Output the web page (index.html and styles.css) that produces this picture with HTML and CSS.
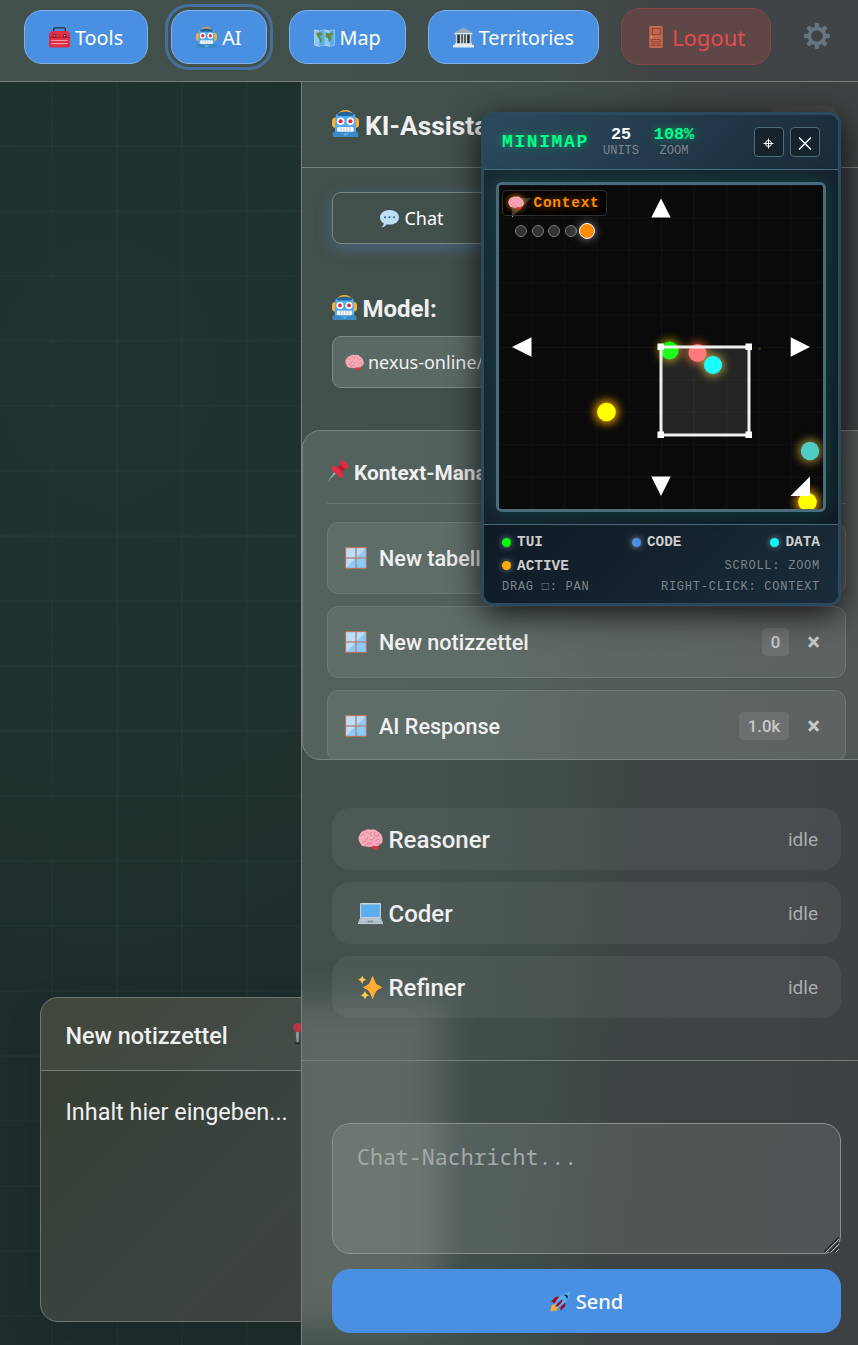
FILE: index.html
```html
<!DOCTYPE html>
<html lang="de">
<head>
<meta charset="utf-8">
<title>Workspace</title>
<link rel="stylesheet" href="styles.css">
</head>
<body>
<svg class="sprite" aria-hidden="true">
  <symbol id="robot" viewBox="0 0 36 36">
    <rect x="0" y="10" width="36" height="14" rx="5" fill="#ffac33"/><path d="M8 6Q10 0 18 0T28 6Z" fill="#ffac33"/>
    <path d="M5 7Q5 5 8 5H28Q31 5 31 7L32 24V31H4V24Z" fill="#55acee"/><path d="M7 5Q18-1 29 5L28 8H8Z" fill="#226699"/>
    <path d="M1 31Q1 29 4 29H32Q35 29 35 31V36H1Z" fill="#3b88c3"/><path d="M13 31H23L18 35Z" fill="#55acee"/>
    <circle cx="11.500" cy="15" r="5" fill="#fff"/><circle cx="24.500" cy="15" r="5" fill="#fff"/><circle cx="11.500" cy="15" r="2.800" fill="#dd2e44"/><circle cx="24.500" cy="15" r="2.800" fill="#dd2e44"/>
    <rect x="7" y="22.500" width="22" height="6.500" rx="2" fill="#f5f8fa"/><path d="M12 22.500V29M16 22.500V29M20 22.500V29M24 22.500V29" stroke="#aab8c2"/>
  </symbol>
  <symbol id="toolbox" viewBox="0 0 36 36">
    <path d="M8 8V3Q8 1.500 10 1.500H26Q28 1.500 28 3V8" fill="none" stroke="#292f33" stroke-width="2.500"/>
    <path d="M4 7H32Q36 10 36 14V17H0V14Q0 10 4 7Z" fill="#dd2e44"/><path d="M0 16H36V32Q36 35 33 35H3Q0 35 0 32Z" fill="#dd2e44"/>
    <path d="M0 18H36" stroke="#be1931" stroke-width="1.500"/><circle cx="9" cy="15" r="2.800" fill="#50272f"/><circle cx="27" cy="15" r="2.800" fill="#50272f"/><circle cx="9" cy="15" r="1.200" fill="#ccd6dd"/><circle cx="27" cy="15" r="1.200" fill="#ccd6dd"/>
    <path d="M4 23H32M4 28.500H32" stroke="#f4bfc5" stroke-width="1.500"/>
  </symbol>
  <symbol id="map" viewBox="0 0 36 36">
    <path d="M1 5L9 7L18 5L27 7L35 5V31L27 33L18 31L9 33L1 31Z" fill="#88c9f9" stroke="#ccd6dd" stroke-width="1.500"/>
    <path d="M9 7L18 5V31L9 33ZM27 7L35 5V31L27 33Z" fill="#5dadec"/>
    <path d="M4 10L12 9 15 12 12 15 10 17 14 21 13 26 11 28 10 22 7 18 5 14ZM20 9L25 11 31 9 33 13 29 15 30 20 27 26 25 24 24 19 19 17 20 13Z" fill="#5c913b"/>
  </symbol>
  <symbol id="temple" viewBox="0 0 36 36">
    <path d="M2 10L18 1L34 10Z" fill="#99aab5"/><rect x="3" y="10" width="30" height="3" fill="#e1e8ed"/><rect x="5" y="13" width="26" height="16" fill="#292f33"/>
    <path d="M6 13V29M13 13V29M18 13V29M23 13V29M30 13V29" stroke="#ccd6dd" stroke-width="2.600"/><path d="M3 28H33V31H36V35H0V31H3Z" fill="#e1e8ed"/>
  </symbol>
  <symbol id="door" viewBox="0 0 22 36">
    <rect width="22" height="36" rx="2" fill="#bf6952"/><rect x="5" y="4" width="13" height="10" fill="none" stroke="#8f3f2c" stroke-width="1.500"/><path d="M4 22H18V26H4ZM4 29H18V32H4Z" fill="#bf6952" stroke="#8f3f2c" stroke-width="1.300"/><circle cx="3.500" cy="18" r="1.700" fill="#ffac33"/>
  </symbol>
  <symbol id="gear" viewBox="0 0 36 36">
    <g fill="#66757f"><g id="teeth"><rect x="15" y="0" width="6" height="7" rx="2"/><rect x="15" y="29" width="6" height="7" rx="2"/></g><use href="#teeth" transform="rotate(45 18 18)"/><use href="#teeth" transform="rotate(90 18 18)"/><use href="#teeth" transform="rotate(135 18 18)"/></g>
    <circle cx="18" cy="18" r="10.500" fill="none" stroke="#66757f" stroke-width="5"/>
  </symbol>
  <symbol id="speech" viewBox="0 0 36 36">
    <path d="M18 2C8 2 0 8 0 16C0 21 3 25 7 27C7 30 5 33 3 35C8 34 11 32 13 29C28 31 36 24 36 16C36 8 28 2 18 2Z" fill="#bddef4"/><g fill="#2a6797"><circle cx="9.500" cy="15.500" r="2"/><circle cx="18" cy="15.500" r="2"/><circle cx="26.500" cy="15.500" r="2"/></g>
  </symbol>
  <symbol id="brain" viewBox="0 0 36 36">
    <path d="M17 26Q26 25 30 28Q29 33 24 33Q19 31 17 26Z" fill="#dd2e44"/>
    <path d="M10 5Q14 2 18 4Q24 2 28 6Q34 9 35 15Q37 22 32 25Q29 29 22 27Q18 30 13 28Q5 29 3 23Q-1 17 2 12Q4 6 10 5Z" fill="#f4abba"/>
    <path d="M4 13Q9 8 9 13M6 21Q11 24 11 18Q15 18 14 14M11 9Q14 5 15 10M14 25Q18 22 21 25M17 18Q22 20 23 15M19 7Q16 12 20 13M25 7Q22 12 26 13Q30 14 30 10M25 21Q27 16 32 19M27 25Q31 26 31 22M10 27Q12 23 17 22" fill="none" stroke="#e8758b" stroke-width="1.300"/>
  </symbol>
  <symbol id="pushpin" viewBox="0 0 36 36">
    <path d="M16 21L1 35L13 18Z" fill="#99aab5"/><path d="M13 15L23 7L30 14L21 23Z" fill="#be1931"/><path d="M23 1Q26-1 29 2L34 7Q37 11 34 13Q31 15 28 13L22 7Q20 3 23 1Z" fill="#dd2e44"/><path d="M8 12Q12 7 18 13L25 20Q29 25 24 29Q20 30 17 25L12 20Q5 17 8 12Z" fill="#dd2e44"/>
  </symbol>
  <symbol id="window" viewBox="0 0 36 36">
    <rect x=".8" y=".8" width="34.400" height="34.400" fill="#8ccaf7"/><path d="M1 1H17V17H1ZM19 1H35L19 17ZM1 19H17L1 35Z" fill="#bbddf5"/><path d="M1 1H35V35H1ZM18 1V35M1 18H35" fill="none" stroke="#c1694f" stroke-width="1.600"/>
  </symbol>
  <symbol id="laptop" viewBox="0 0 36 36">
    <rect x="3" y="3" width="30" height="22" rx="1" fill="#ccd6dd"/><rect x="4.500" y="5" width="27" height="18" fill="#5dadec"/><path d="M3 24H33L36 31V33H0V31Z" fill="#aab8c2"/><path d="M4 26H32M3 28.500H33" stroke="#ccd6dd"/><rect x="14" y="28" width="8" height="3" fill="#8899a6"/><path d="M0 32.500H36" stroke="#ccd6dd"/>
  </symbol>
  <symbol id="sparkles" viewBox="0 0 36 36">
    <path d="M21 1Q24 15 35 18Q24 21 21 35Q18 21 7 18Q18 15 21 1Z" fill="#ffac33"/><path d="M21 1L26 13 35 18 26 22 21 35 16 22 7 18 16 13Z" fill="#ffac33"/><path d="M6 1L8 5 12 7 8 8.500 6 13 4 8.500 0 7 4 5ZM10 23L12 27 16 29 12 31 10 35 8 31 4 29 8 27Z" fill="#ffcc4d"/>
  </symbol>
  <symbol id="rocket" viewBox="0 0 36 36">
    <path d="M2 18L10 10H18L8 21ZM18 28L26 18V26L18 34Z" fill="#a0041e"/><path d="M1 35L3 24L10 22L14 27L12 33Z" fill="#ffac33"/><path d="M8 23Q14 5 35 1Q31 22 13 28Z" fill="#55acee"/><path d="M9 28Q14 17 22 14Q20 23 9 28Z" fill="#a0041e"/><path d="M23 7Q29 4 31 10L29 14Q28 8 23 7Z" fill="#17202a"/>
  </symbol>
  <symbol id="pin" viewBox="0 0 12 24"><path d="M4 8H8L7 22H5Z" fill="#8b989f"/><ellipse cx="6" cy="22" rx="3" ry="1" fill="#202825"/><circle cx="6" cy="5" r="5" fill="#b73542"/></symbol>
</svg>

<div class="app">
  <header class="toolbar">
    <button class="btn"><svg class="ico"><use href="#toolbox"/></svg>Tools</button>
    <button class="btn focused"><svg class="ico"><use href="#robot"/></svg>AI</button>
    <button class="btn"><svg class="ico"><use href="#map"/></svg>Map</button>
    <button class="btn"><svg class="ico"><use href="#temple"/></svg>Territories</button>
    <button class="btn logout"><svg class="ico door"><use href="#door"/></svg>Logout</button>
    <svg class="gear"><use href="#gear"/></svg>
  </header>

  <main class="workspace">
    <section class="stage">
      <article class="note">
        <div class="note-head"><span>New notizzettel</span><svg class="note-pin"><use href="#pin"/></svg></div>
        <div class="note-body">Inhalt hier eingeben...</div>
      </article>
    </section>

    <aside class="panel">
      <div class="panel-head"><svg class="ico"><use href="#robot"/></svg><h2>KI-Assistant</h2><span class="ghost"></span></div>
      <div class="setup">
        <button class="tab"><svg class="ico"><use href="#speech"/></svg>Chat</button>
        <div class="model-label"><svg class="ico"><use href="#robot"/></svg>Model:</div>
        <div class="select"><svg class="ico"><use href="#brain"/></svg>nexus-online/</div>
      </div>
      <section class="context">
        <div class="context-head"><svg class="ico"><use href="#pushpin"/></svg>Kontext-Manager<span class="chip"></span></div>
        <div class="item"><svg class="ico"><use href="#window"/></svg><span class="name">New tabelle</span></div>
        <div class="item"><svg class="ico"><use href="#window"/></svg><span class="name">New notizzettel</span><span class="count">0</span><b class="remove">×</b></div>
        <div class="item"><svg class="ico"><use href="#window"/></svg><span class="name">AI Response</span><span class="count">1.0k</span><b class="remove">×</b></div>
      </section>
      <section class="agents">
        <div class="agent"><svg class="ico"><use href="#brain"/></svg><span>Reasoner</span><em>idle</em></div>
        <div class="agent"><svg class="ico"><use href="#laptop"/></svg><span>Coder</span><em>idle</em></div>
        <div class="agent"><svg class="ico"><use href="#sparkles"/></svg><span>Refiner</span><em>idle</em></div>
      </section>
      <section class="composer">
        <div class="field">
          <textarea class="message" placeholder="Chat-Nachricht..."></textarea>
          <svg class="grip" viewBox="0 0 16 16"><path d="M0 15L15 0M5 15L15 5M10 15L15 10" stroke="#24282a" stroke-width="1.500"/><path d="M1.500 15.500L15 2M6.500 15.500L15 7M11.500 15.500L15 12" stroke="#aeb2b2"/></svg>
        </div>
        <button class="send"><svg class="ico"><use href="#rocket"/></svg>Send</button>
      </section>
    </aside>
  </main>

  <section class="minimap">
    <div class="mm-head">
      <b class="mm-title">MINIMAP</b>
      <div class="stat"><b>25</b><span>UNITS</span></div>
      <div class="stat zoom"><b>108%</b><span>ZOOM</span></div>
      <button class="mm-btn first"><svg viewBox="0 0 28 28"><g fill="none" stroke="#fff"><circle cx="13.500" cy="15.500" r="3"/><path d="M13.500 10.500V20.500M8.500 15.500H18.500"/></g></svg></button>
      <button class="mm-btn"><svg viewBox="0 0 28 28"><path d="M8 9.500L20 21.500M20 9.500L8 21.500" stroke="#fff" stroke-width="1.400"/></svg></button>
    </div>
    <div class="mm-body">
      <div class="mm-view">
        <svg class="mm-map" viewBox="0 0 324 324">
          <defs>
            <pattern id="grid" width="32.400" height="32.400" patternUnits="userSpaceOnUse"><path d="M0 0H32.400M0 0V32.400" stroke="#111111" stroke-width="2"/></pattern>
            <filter id="glow" x="-100%" y="-100%" width="300%" height="300%"><feGaussianBlur stdDeviation="4"/></filter>
          </defs>
          <rect width="324" height="324" fill="url(#grid)"/>
          <g filter="url(#glow)" opacity=".85"><g fill="#ffaa00"><circle cx="107.500" cy="227" r="12"/><circle cx="308.500" cy="317" r="12"/></g><circle cx="170.500" cy="165.500" r="11" fill="#b09a00"/><circle cx="198.500" cy="168" r="11" fill="#d05020"/><circle cx="214" cy="180" r="11" fill="#b0a830"/><circle cx="311" cy="266" r="12" fill="#a08a30"/></g>
          <circle cx="170.500" cy="165.500" r="9" fill="#00ff00"/><circle cx="198.500" cy="168" r="9" fill="#ff6b6b"/><circle cx="214" cy="180" r="9" fill="#00ffff"/>
          <circle cx="107.500" cy="227" r="9.300" fill="#ffff00"/><circle cx="311" cy="266" r="9.200" fill="#4ecdc4"/><circle cx="308.500" cy="317" r="9.300" fill="#ffff00"/><circle cx="260.500" cy="163.500" r="1.500" fill="#3a2c08"/>
          <rect x="162" y="162" width="88" height="88" fill="#fff" fill-opacity=".11" stroke="#f0eeee" stroke-width="3"/>
          <path d="M158.500 158.500h6.500v6.500h-6.500zM246.500 158.500h6.500v6.500h-6.500zM158.500 246.500h6.500v6.500h-6.500zM246.500 246.500h6.500v6.500h-6.500z" fill="#fff"/>
          <path d="M162 13.500L171.700 32.500H152.300ZM13 162L32.500 152.300V171.700ZM311 162L291.700 152.300V171.700ZM162 311L152.300 291.500H171.700ZM311 291.500V311H291.500Z" fill="#fff"/><path d="M12.500 13H32L13 32.500Z" fill="#b4b4b4"/>
        </svg>
        <div class="mode"><svg class="ico"><use href="#brain"/></svg>Context</div>
        <div class="modes"><i></i><i></i><i></i><i></i><i class="on"></i></div>
      </div>
    </div>
    <div class="mm-foot">
      <div class="row keys"><b class="key"><i class="tui"></i>TUI</b><b class="key"><i class="code"></i>CODE</b><b class="key"><i class="data"></i>DATA</b></div>
      <div class="row"><b class="key"><i class="active"></i>ACTIVE</b><span>SCROLL: ZOOM</span></div>
      <div class="row hints"><span>DRAG □: PAN</span><span>RIGHT-CLICK: CONTEXT</span></div>
    </div>
  </section>
</div>
</body>
</html>
```
FILE: styles.css
```css
* { box-sizing: border-box; }
body { margin: 0; }
button { font: inherit; color: inherit; padding: 0; margin: 0; }
.sprite { position: absolute; width: 0; height: 0; }
.ico { flex: none; display: block; }

.app {
  position: relative;
  width: 858px;
  height: 1345px;
  overflow: hidden;
  display: flex;
  flex-direction: column;
  background: #1e2f2d;
  color: #f0f0f0;
  font-family: Roboto, sans-serif;
}

/* Toolbar */
.toolbar {
  height: 82px;
  flex: none;
  display: flex;
  align-items: flex-start;
  gap: 22px;
  padding: 8px 24px;
  border-bottom: 1px solid #78807e;
  background: linear-gradient(90deg, #42504c 0, #42504c 40%, #404c4a 65%, #404446 76%, #404446 100%);
  font-family: "Noto Sans", sans-serif;
}
.btn {
  height: 54px;
  margin-top: 2px;
  padding: 0 24px;
  display: flex;
  align-items: center;
  gap: 5px;
  border: 1px solid #80b1ec;
  border-radius: 18px;
  background: #4a90e2;
  color: #fff;
  font-size: 19.800px;
  white-space: nowrap;
}
.btn .ico { width: 21px; height: 21px; }
.btn.focused { outline: 3px solid #45709d; outline-offset: 3px; margin-left: 1px; }
.btn.logout {
  height: 57px;
  width: 150px;
  margin-top: 0;
  padding-left: 27px;
  gap: 9px;
  border-color: #854546;
  background: #5e4746;
  color: #e24c4c;
  font-size: 22px;
}
.btn .door { width: 14px; height: 22px; }
.gear { width: 26px; height: 26px; margin: 15px 0 0 11px; flex: none; }

/* Workspace */
.workspace { flex: 1; min-height: 0; display: grid; grid-template-columns: 301px 557px; }
.stage {
  position: relative;
  overflow: hidden;
  background:
    linear-gradient(rgba(120, 180, 150, .03) 2px, transparent 2px) 0 63px / 65px 65px,
    linear-gradient(90deg, rgba(120, 180, 150, .03) 2px, transparent 2px) 51px 0 / 65px 65px,
    radial-gradient(ellipse 520px 650px at 105px 290px, #1f3431, #1f312e 60%, #1e2d2c);
}
.note {
  position: absolute;
  left: 40px;
  top: 915px;
  width: 400px;
  height: 325px;
  border: 1px solid #6f7974;
  border-radius: 18px;
  overflow: hidden;
  background: linear-gradient(135deg, #373e31 0, #384139 30%, #3a443f 50%, #3e4242 75%);
  box-shadow: 0 8px 32px rgba(0, 0, 0, .15);
}
.note-head {
  height: 73px;
  padding: 3px 0 0 24.500px;
  display: flex;
  align-items: center;
  border-bottom: 1px solid #747d77;
  background: rgba(255, 255, 255, .05);
  font-size: 23.400px;
  font-weight: 500;
}
.note-head span { width: 226px; flex: none; }
.note-pin { width: 11px; height: 22px; margin-top: -3px; }
.note-body { padding: 26px 24.500px; font-size: 23.400px; line-height: 30px; }

/* Assistant panel */
.panel {
  position: relative;
  overflow: hidden;
  border-left: 1px solid #78807e;
  background: linear-gradient(94deg, #42504c 0, #42504c 30%, #3f4b49 50%, #3e4445 59%, #3d4144 100%);
  display: flex;
  flex-direction: column;
}
.panel::before {
  content: "";
  position: absolute;
  left: -30px;
  top: 920px;
  width: 170px;
  height: 325px;
  background: #5e6761;
  filter: blur(16px);
}
.panel > * { position: relative; flex: none; }
.panel-head {
  height: 86px;
  padding: 0 19px 0 30px;
  display: flex;
  align-items: center;
  gap: 6px;
  border-bottom: 1px solid #78807e;
}
.panel-head .ico { width: 27px; height: 27px; margin-top: -3px; }
.panel-head h2 { margin: 2px 0 0; font-size: 26.400px; font-weight: 700; }
.ghost { margin: 8px 0 0 auto; width: 72px; height: 46px; border-radius: 14px; background: #474a4b; }
.setup { height: 262px; padding: 24px 17px 0 30px; }
.tab, .select { display: flex; align-items: center; height: 52px; border: 1px solid #7b8884; border-radius: 9px; font-family: "Noto Sans", sans-serif; font-size: 18px; }
.tab { width: 160px; justify-content: center; gap: 5px; background: #42504c; color: #fff; box-shadow: 0 4px 15px rgba(74, 144, 226, .35); }
.tab .ico, .select .ico { width: 19px; height: 19px; }
.model-label { height: 92px; padding-top: 38px; display: flex; align-items: center; gap: 5.500px; font-size: 24px; font-weight: 700; }
.model-label .ico { width: 25px; height: 25px; margin-top: -3px; }
.select { padding-left: 12px; gap: 4px; background: #5b6965; }

.context {
  height: 330px;
  width: 580px;
  overflow: hidden;
  padding: 0 35px 0 24px;
  border: 1px solid #788481;
  border-radius: 18px;
  background: linear-gradient(94deg, #53625e 0, #53615d 35%, #525b5a 52%, #515657 100%);
}
.context-head { height: 73px; margin-bottom: 18px; padding-top: 12px; display: flex; align-items: center; gap: 5px; border-bottom: 1px solid #6a7673; font-size: 20.800px; font-weight: 700; }
.context-head .ico { width: 22px; height: 22px; margin-top: -5px; }
.chip { width: 60px; height: 34px; margin-left: auto; border-radius: 10px; background: #4c5953; }
.item {
  height: 72px;
  width: 519px;
  margin-bottom: 12px;
  padding: 0 25px 0 17px;
  display: flex;
  align-items: center;
  border: 1px solid #6e7876;
  border-radius: 11px;
  background: rgba(255, 255, 255, .07);
  font-size: 21.600px;
  font-weight: 500;
}
.item .ico { width: 22px; height: 22px; margin-right: 12px; margin-top: -1px; }
.name { flex: 1; }
.count { height: 28px; padding: 0 9px; border-radius: 5px; background: #6d7071; color: #c8caca; font-size: 16.800px; line-height: 29px; }
.remove { margin-left: 18px; color: #c8caca; font-size: 24px; }

.agents { height: 301px; padding: 48px 17px 0 30px; border-bottom: 1px solid #78807e; display: flex; flex-direction: column; gap: 12px; }
.agent { height: 62px; padding: 0 23px 0 26px; display: flex; align-items: center; gap: 5.500px; border-radius: 18px; background: rgba(255, 255, 255, .055); font-size: 24px; font-weight: 500; }
.agent .ico { width: 25px; height: 25px; }
.agent span { padding-top: 2px; }
.agent em { margin-left: auto; font: 400 19px Roboto, sans-serif; color: #a9acad; }

.composer { padding: 62px 17px 0 30px; display: flex; flex-direction: column; gap: 15px; }
.field { position: relative; }
.message {
  display: block;
  width: 100%;
  height: 131px;
  padding: 18px 24px;
  border: 1px solid #8b9190;
  border-radius: 18px;
  background: rgba(255, 255, 255, .1);
  color: #fff;
  resize: none;
  font: 21.600px "Noto Sans Mono", monospace;
}
.message::placeholder { color: #a4a9a8; }
.grip { position: absolute; right: 1px; bottom: 1px; width: 16px; height: 16px; }
.send { height: 64px; border: 0; border-radius: 18px; background: #4a90e2; color: #fff; display: flex; align-items: center; justify-content: center; gap: 5px; font: 500 20px "Noto Sans", sans-serif; }
.send .ico { width: 21px; height: 21px; }

/* Minimap overlay */
.minimap {
  position: absolute;
  z-index: 1;
  left: 481px;
  top: 112px;
  width: 360px;
  height: 494px;
  border: 3px solid #2c4a5e;
  border-radius: 12px;
  overflow: hidden;
  background: linear-gradient(135deg, #1a2a38, #0f1a24);
  box-shadow: 0 8px 32px rgba(0, 0, 0, .8);
  font-family: "Liberation Mono", monospace;
}
.mm-head { height: 55px; padding: 0 18px; display: flex; align-items: center; border-bottom: 1px solid #4a6b7c; background: linear-gradient(135deg, #2c4a5e, #1a2a38); }
.mm-title { color: #00ff88; font-size: 18px; letter-spacing: 1.600px; text-shadow: 0 0 8px rgba(0, 255, 136, .5); width: 101px; }
.stat { display: flex; flex-direction: column; align-items: center; width: 36px; margin-right: 15px; padding-top: 2px; line-height: 16px; }
.stat b { font-size: 16.800px; color: #fff; }
.stat span { font-size: 12px; color: #7d868c; }
.zoom { width: 40px; }
.zoom b { color: #00ff88; text-shadow: 0 0 8px rgba(0, 255, 136, .5); }
.mm-btn { width: 30px; height: 30px; border: 1px solid #4a6b7c; border-radius: 4px; background: #16222c; margin-left: 6px; }
.mm-btn.first { margin-left: auto; }
.mm-btn svg { display: block; width: 28px; height: 28px; }
.mm-body { height: 354px; padding: 12px; }
.mm-view { position: relative; width: 330px; height: 330px; border: 3px solid #4a6b7c; border-radius: 6px; overflow: hidden; background: #0a0a0a; box-shadow: 0 0 20px rgba(0, 255, 136, .15); }
.mm-map { display: block; width: 324px; height: 324px; }
.mode { position: absolute; left: 3px; top: 5px; width: 105px; height: 26px; padding-left: 5px; display: flex; align-items: center; gap: 9.500px; border: 1px solid #303030; border-radius: 4px; background: rgba(0, 0, 0, .7); color: #ff8c00; font-size: 14.400px; font-weight: 700; letter-spacing: .8px; text-shadow: 0 0 8px rgba(255, 140, 0, .6); }
.mode .ico { width: 16px; height: 16px; filter: drop-shadow(0 0 3px #ff8c00); }
.modes { position: absolute; left: 16px; top: 38px; height: 16px; display: flex; align-items: center; gap: 4.700px; }
.modes i { width: 12px; height: 12px; border: 1px solid #777; border-radius: 50%; background: #333; }
.modes .on { width: 16px; height: 16px; margin-left: -3px; border-color: #fff; background: #ff8c00; box-shadow: 0 0 10px rgba(255, 255, 255, .5); }
.mm-foot { height: 79px; padding: 6px 18px; border-top: 1px solid #4a6b7c; background: linear-gradient(135deg, #0f1a24, #1a2c3a); color: #7d868c; font-size: 12px; letter-spacing: .75px; }
.row { display: flex; justify-content: space-between; align-items: center; height: 23px; }
.keys .key { margin-top: -1px; }
.hints { height: 20px; }
.key { display: flex; align-items: center; gap: 6px; color: #ccc; font-size: 14.400px; letter-spacing: 0; }
.key i { width: 9px; height: 9px; border-radius: 50%; box-shadow: 0 0 6px rgba(255, 255, 255, .5); }
.tui { background: #00ff00; }
.code { background: #4a90e2; }
.data { background: #00ffff; }
.active { background: #ffaa00; }
```
